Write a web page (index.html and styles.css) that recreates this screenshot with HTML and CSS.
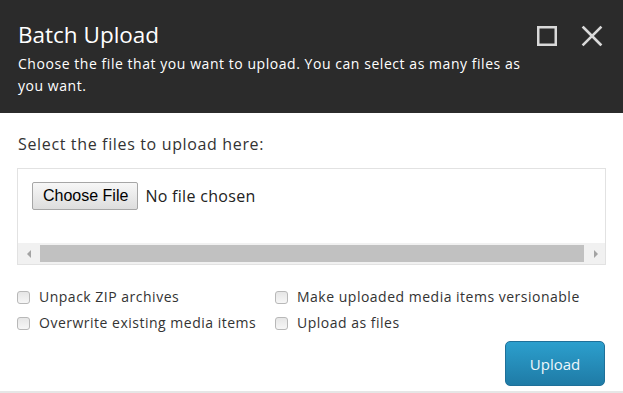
FILE: index.html
```html
<!DOCTYPE html>
<html lang="en">
<head>
  <meta charset="UTF-8">
  <title>Batch Upload</title>
  <link rel="stylesheet" href="styles.css">
</head>
<body>
  <div class="dialog">
    <!-- Header -->
    <header class="dialog-header">
      <div class="header-text">
        <h1>Batch Upload</h1>
        <p>Choose the file that you want to upload. You can select as many files as you want.</p>
      </div>
      <div class="header-tools">
        <svg class="tool" width="22" height="22" viewBox="0 0 22 22">
          <rect x="2.25" y="2.25" width="17.5" height="17.5" fill="none" stroke="#d9d9d9" stroke-width="2.5"/>
        </svg>
        <svg class="tool" width="22" height="22" viewBox="0 0 22 22">
          <path d="M2.5 2.5 L19.5 19.5 M19.5 2.5 L2.5 19.5" stroke="#d9d9d9" stroke-width="2.6" stroke-linecap="square"/>
        </svg>
      </div>
    </header>

    <!-- Body -->
    <section class="dialog-body">
      <p class="select-label">Select the files to upload here:</p>

      <div class="file-box">
        <div class="file-row">
          <span class="choose-button">Choose File</span>
          <span class="file-name">No file chosen</span>
        </div>
        <div class="hscroll">
          <span class="arrow left"></span>
          <span class="thumb"></span>
          <span class="arrow right"></span>
        </div>
      </div>

      <div class="options">
        <label class="option"><input type="checkbox"> Unpack ZIP archives</label>
        <label class="option"><input type="checkbox"> Make uploaded media items versionable</label>
        <label class="option"><input type="checkbox"> Overwrite existing media items</label>
        <label class="option"><input type="checkbox"> Upload as files</label>
      </div>

      <div class="actions">
        <button class="upload-button">Upload</button>
      </div>
    </section>
  </div>
</body>
</html>
```

FILE: styles.css
```css
* {
  margin: 0;
  padding: 0;
  box-sizing: border-box;
}

body {
  font-family: "Open Sans", Arial, sans-serif;
  background-color: #fff;
  color: #333;
}

.dialog {
  width: 623px;
  height: 393px;
  overflow: hidden;
}

/* Header */
.dialog-header {
  background-color: #2b2b2b;
  color: #fff;
  height: 113px;
  padding: 20px 18px 0 18px;
  display: flex;
  justify-content: space-between;
}

.header-text {
  width: 510px;
}

.dialog-header h1 {
  font-size: 22.5px;
  font-weight: normal;
  line-height: 30px;
}

.dialog-header p {
  font-size: 14px;
  line-height: 22px;
  letter-spacing: 0.55px;
  margin-top: 3px;
}

.header-tools {
  display: flex;
  gap: 23px;
  padding-top: 5px;
  margin-right: 2px;
}

/* Body */
.dialog-body {
  padding: 20px 17px 0 17px;
  border-bottom: 2px solid #e6e6e6;
  height: 280px;
}

.select-label {
  font-size: 16px;
  line-height: 22px;
  letter-spacing: 0.65px;
  padding-left: 1px;
}

.file-box {
  margin-top: 13px;
  border: 1px solid #e2e2e2;
  height: 97px;
  display: flex;
  flex-direction: column;
  justify-content: space-between;
}

.file-row {
  display: flex;
  align-items: center;
  padding: 13px 0 0 14px;
}

.choose-button {
  font-family: Arial, "Liberation Sans", sans-serif;
  font-size: 16px;
  color: #000;
  height: 28px;
  line-height: 26px;
  padding: 0 9px 0 10px;
  border: 1px solid #a6a6a6;
  border-radius: 2px;
  background: linear-gradient(#f7f7f7, #dddddd);
}

.file-name {
  font-size: 16px;
  letter-spacing: 0.3px;
  color: #222;
  margin-left: 7px;
}

.hscroll {
  height: 21px;
  background-color: #f1f1f1;
  display: flex;
  align-items: center;
}

.arrow {
  width: 0;
  height: 0;
  border-top: 4px solid transparent;
  border-bottom: 4px solid transparent;
}

.arrow.left {
  border-right: 4px solid #a3a3a3;
  margin: 0 9px 0 9px;
}

.arrow.right {
  border-left: 4px solid #a3a3a3;
  margin: 0 7px 0 10px;
}

.thumb {
  flex: 1;
  height: 17px;
  background-color: #c1c1c1;
}

/* Options */
.options {
  display: grid;
  grid-template-columns: 258px 1fr;
  row-gap: 6px;
  margin-top: 22px;
}

.option {
  font-size: 14px;
  line-height: 20px;
  letter-spacing: 0.5px;
  display: flex;
  align-items: center;
  gap: 9px;
  color: #333;
}

.option input {
  appearance: none;
  width: 13px;
  height: 13px;
  border: 1px solid #b8b8b8;
  border-radius: 3px;
  background: linear-gradient(#e6e6e6, #f6f6f6);
}

/* Actions */
.actions {
  display: flex;
  justify-content: flex-end;
  margin-top: 8px;
  margin-right: 1px;
}

.upload-button {
  font-family: "Open Sans", Arial, sans-serif;
  font-size: 15px;
  color: #eef7fb;
  width: 100px;
  height: 45px;
  border: 1px solid #1f7099;
  border-radius: 5px;
  background: linear-gradient(#2c9fcd, #1f7ba6);
  cursor: pointer;
}
```
